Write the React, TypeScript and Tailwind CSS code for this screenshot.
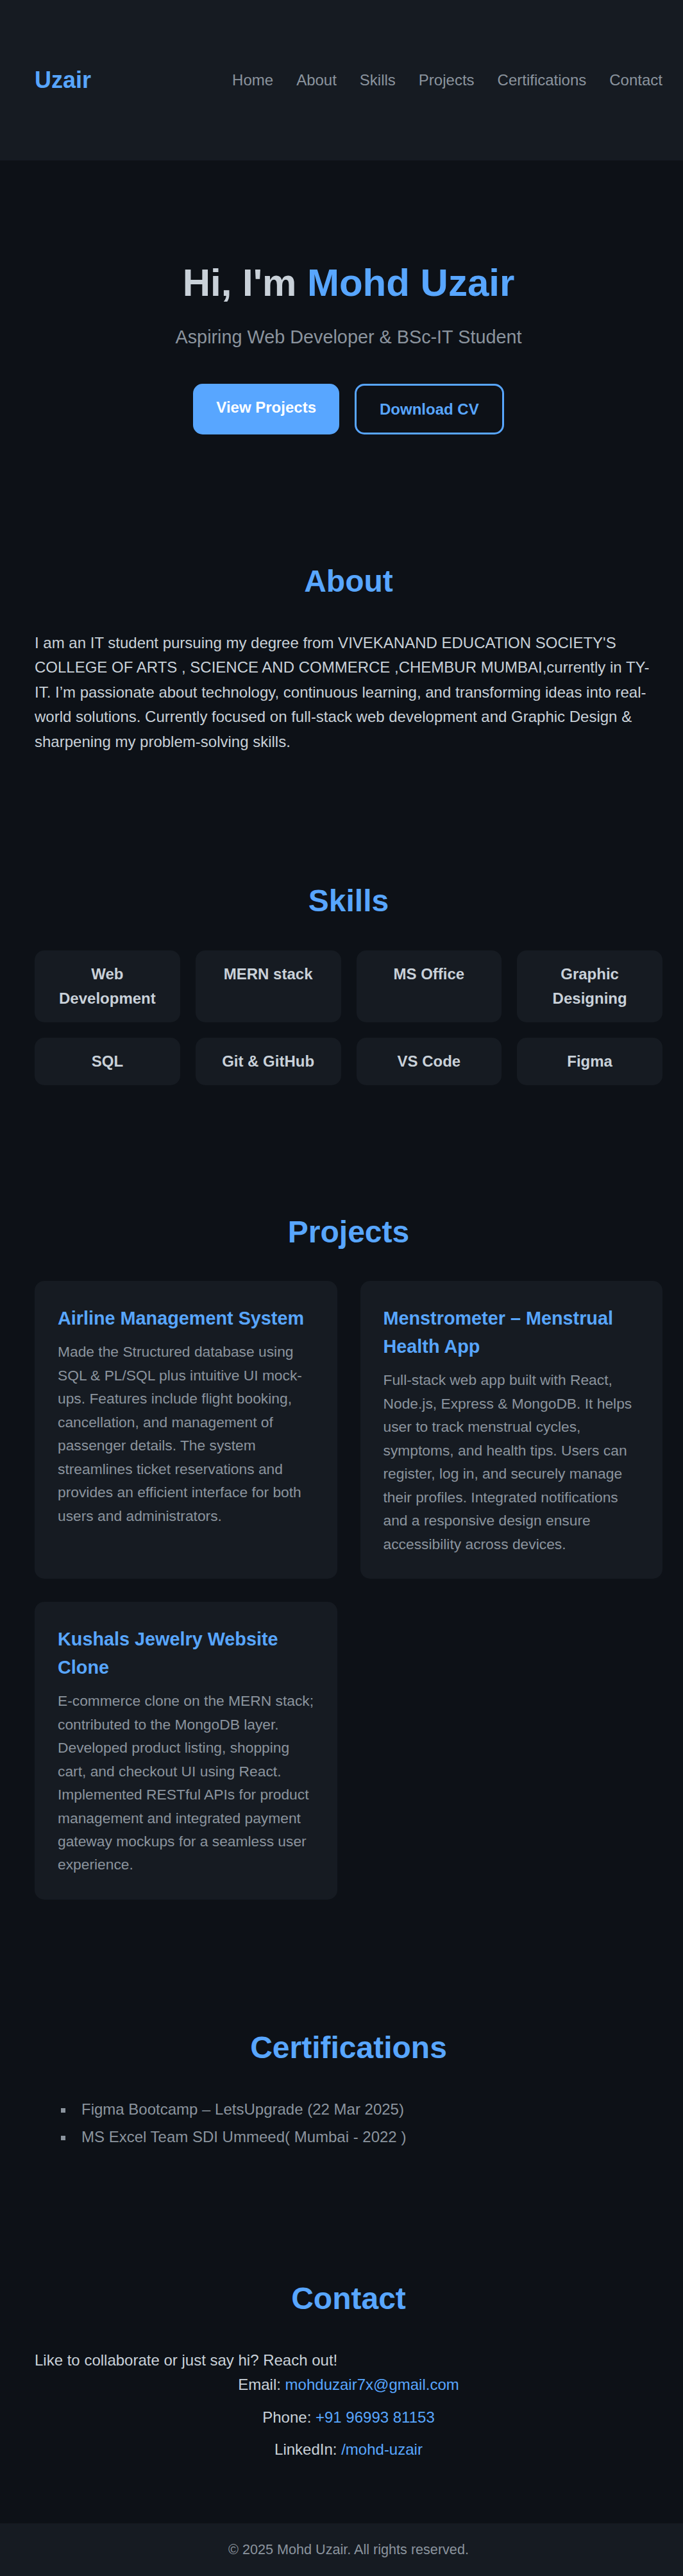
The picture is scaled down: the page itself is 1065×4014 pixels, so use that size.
const navLinks = ["Home", "About", "Skills", "Projects", "Certifications", "Contact"];

const skills = [
  "Web Development",
  "MERN stack",
  "MS Office",
  "Graphic Designing",
  "SQL",
  "Git & GitHub",
  "VS Code",
  "Figma",
];

const projects = [
  {
    title: "Airline Management System",
    description:
      "Made the Structured database using SQL & PL/SQL plus intuitive UI mock-ups. Features include flight booking, cancellation, and management of passenger details. The system streamlines ticket reservations and provides an efficient interface for both users and administrators.",
  },
  {
    title: "Menstrometer – Menstrual Health App",
    description:
      "Full-stack web app built with React, Node.js, Express & MongoDB. It helps user to track menstrual cycles, symptoms, and health tips. Users can register, log in, and securely manage their profiles. Integrated notifications and a responsive design ensure accessibility across devices.",
  },
  {
    title: "Kushals Jewelry Website Clone",
    description:
      "E-commerce clone on the MERN stack; contributed to the MongoDB layer. Developed product listing, shopping cart, and checkout UI using React. Implemented RESTful APIs for product management and integrated payment gateway mockups for a seamless user experience.",
  },
];

const certifications = [
  "Figma Bootcamp – LetsUpgrade (22 Mar 2025)",
  "MS Excel Team SDI Ummeed( Mumbai - 2022 )",
];

function SectionTitle({ children }: { children: React.ReactNode }) {
  return (
    <h2 className="text-center text-[48px] font-bold leading-[57.6px] text-[#58a6ff] mb-[48px]">
      {children}
    </h2>
  );
}

export default function App() {
  return (
    <div className="min-h-[4014px] bg-[#0d1117] font-['Liberation_Sans',Arial,sans-serif] text-[24px] leading-[38.4px] text-[#c9d1d9]">
      <header className="h-[250px] bg-[#161b22] pl-[54px] pr-[32px] flex items-center justify-between">
        <div className="text-[36px] font-bold text-[#58a6ff]">Uzair</div>
        <nav className="flex gap-[36px] leading-normal">
          {navLinks.map((link) => (
            <a key={link} href={`#${link.toLowerCase()}`} className="text-[#8b949e]">
              {link}
            </a>
          ))}
        </nav>
      </header>

      <section id="home" className="pt-[155px] pb-[100px] pl-[54px] pr-[32px] text-center">
        <h1 className="text-[60px] font-bold leading-[72px]">
          Hi, I'm <span className="text-[#58a6ff]">Mohd Uzair</span>
        </h1>
        <p className="mt-[25px] text-[28.8px] leading-[46px] text-[#8b949e]">
          Aspiring Web Developer &amp; BSc-IT Student
        </p>
        <div className="mt-[50px] flex justify-center gap-[24px]">
          <a className="rounded-[15px] bg-[#58a6ff] px-[36px] py-[17.5px] font-bold text-white">
            View Projects
          </a>
          <a className="rounded-[15px] border-[3px] border-[#58a6ff] px-[36px] py-[17.5px] font-bold text-[#58a6ff]">
            Download CV
          </a>
        </div>
      </section>

      <section id="about" className="pt-[100px] pb-[100px] pl-[54px] pr-[32px]">
        <SectionTitle>About</SectionTitle>
        <p>
          I am an IT student pursuing my degree from VIVEKANAND EDUCATION SOCIETY'S COLLEGE OF ARTS ,
          SCIENCE AND COMMERCE ,CHEMBUR MUMBAI,currently in TY-IT. I’m passionate about technology,
          continuous learning, and transforming ideas into real-world solutions. Currently focused on
          full-stack web development and Graphic Design &amp; sharpening my problem-solving skills.
        </p>
      </section>

      <section id="skills" className="pt-[100px] pb-[100px] pl-[54px] pr-[32px]">
        <SectionTitle>Skills</SectionTitle>
        <div className="grid grid-cols-4 gap-[24px]">
          {skills.map((skill) => (
            <div
              key={skill}
              className="rounded-[15px] bg-[#161b22] p-[18px] text-center font-bold leading-[38px]"
            >
              {skill}
            </div>
          ))}
        </div>
      </section>

      <section id="projects" className="pt-[100px] pb-[102px] pl-[54px] pr-[32px]">
        <SectionTitle>Projects</SectionTitle>
        <div className="grid grid-cols-2 gap-[36px]">
          {projects.map((project) => (
            <div key={project.title} className="rounded-[15px] bg-[#161b22] p-[36px]">
              <h3 className="mb-[12px] text-[28.8px] font-bold leading-[44px] text-[#58a6ff]">
                {project.title}
              </h3>
              <p className="text-[22.8px] leading-[36.48px] text-[#8b949e]">{project.description}</p>
            </div>
          ))}
        </div>
      </section>

      <section id="certifications" className="pt-[100px] pb-[104px] pl-[54px] pr-[32px]">
        <SectionTitle>Certifications</SectionTitle>
        <ul className="flex flex-col gap-[5px] text-[#8b949e]">
          {certifications.map((cert) => (
            <li key={cert} className="flex items-center">
              <span className="ml-[41px] mr-[25px] mt-[3px] h-[7px] w-[7px] bg-[#8b949e]" />
              {cert}
            </li>
          ))}
        </ul>
      </section>

      <section id="contact" className="pt-[100px] pb-[95px] pl-[54px] pr-[32px]">
        <SectionTitle>Contact</SectionTitle>
        <p>Like to collaborate or just say hi? Reach out!</p>
        <div className="flex flex-col gap-[12px] text-center">
          <p>
            Email: <a className="text-[#58a6ff]">mohduzair7x@gmail.com</a>
          </p>
          <p>
            Phone: <a className="text-[#58a6ff]">+91 96993 81153</a>
          </p>
          <p>
            LinkedIn: <a className="text-[#58a6ff]">/mohd-uzair</a>
          </p>
        </div>
      </section>

      <footer className="bg-[#161b22] pl-[54px] pr-[32px] py-[24px] text-center text-[21.6px] leading-[34px] text-[#8b949e]">
        © 2025 Mohd Uzair. All rights reserved.
      </footer>
    </div>
  );
}
